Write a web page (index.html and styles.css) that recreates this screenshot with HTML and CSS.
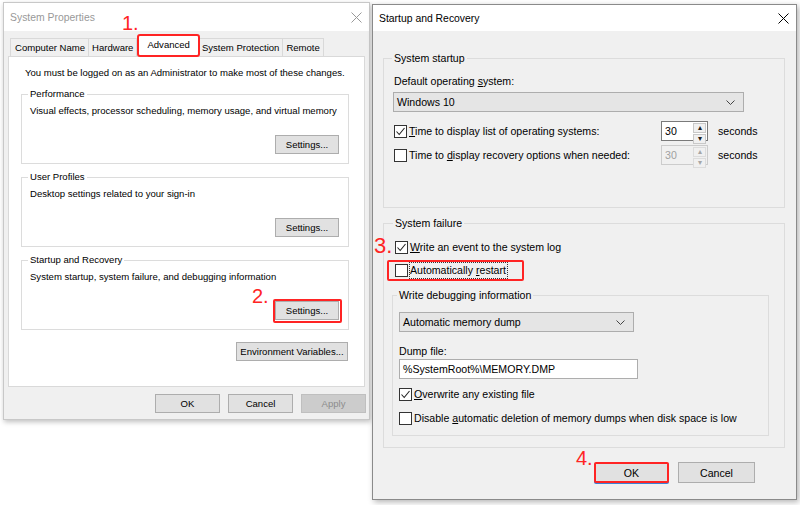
FILE: index.html
```html
<!DOCTYPE html>
<html lang="en">

<head>
    <meta charset="UTF-8">
    <meta name="viewport" content="width=device-width, initial-scale=1.0">
    <title>Startup and Recovery</title>
    <link rel="stylesheet" href="styles.css">
</head>

<body>
    <div class="desk">

        <!-- System Properties (behind) -->
        <section class="win win-sys">
            <header class="titlebar">
                <span>System Properties</span>
                <svg class="x" width="11" height="11" viewBox="0 0 11 11"><path d="M0.5 0.5L10.5 10.5M10.5 0.5L0.5 10.5"/></svg>
            </header>
            <div class="sys-body">
                <nav class="tabs">
                    <span class="tab">Computer Name</span>
                    <span class="tab">Hardware</span>
                    <span class="tab tab-on">Advanced</span>
                    <span class="tab">System Protection</span>
                    <span class="tab">Remote</span>
                </nav>
                <div class="panel">
                    <p class="intro">You must be logged on as an Administrator to make most of these changes.</p>
                    <fieldset class="grp">
                        <legend>Performance</legend>
                        <p class="desc">Visual effects, processor scheduling, memory usage, and virtual memory</p>
                        <div class="grp-foot"><button class="btn">Settings...</button></div>
                    </fieldset>
                    <fieldset class="grp">
                        <legend>User Profiles</legend>
                        <p class="desc">Desktop settings related to your sign-in</p>
                        <div class="grp-foot"><button class="btn">Settings...</button></div>
                    </fieldset>
                    <fieldset class="grp">
                        <legend>Startup and Recovery</legend>
                        <p class="desc">System startup, system failure, and debugging information</p>
                        <div class="grp-foot"><span class="hl-btn"><button class="btn">Settings...</button></span></div>
                    </fieldset>
                    <div class="env"><button class="btn btn-env">Environment Variables...</button></div>
                </div>
                <div class="actions">
                    <button class="btn btn-wide">OK</button>
                    <button class="btn btn-wide">Cancel</button>
                    <button class="btn btn-wide btn-off">Apply</button>
                </div>
            </div>
        </section>

        <!-- Startup and Recovery (front) -->
        <section class="win win-rec">
            <header class="titlebar">
                <span>Startup and Recovery</span>
                <svg class="x" width="11" height="11" viewBox="0 0 11 11"><path d="M0.5 0.5L10.5 10.5M10.5 0.5L0.5 10.5"/></svg>
            </header>
            <div class="rec-body">
                <fieldset class="box box-startup">
                    <legend>System startup</legend>
                    <div class="lbl">Default operating <u>s</u>ystem:</div>
                    <div class="select sel-os">
                        <span>Windows 10</span>
                        <svg width="9" height="5" viewBox="0 0 9 5"><path d="M0.5 0.5L4.5 4.5L8.5 0.5"/></svg>
                    </div>
                    <div class="time-row">
                        <label class="check"><span class="cb"><svg width="11" height="11" viewBox="0 0 11 11"><path d="M1.5 5.5L4.2 8.5L9.5 2"/></svg></span><span><u>T</u>ime to display list of operating systems:</span></label>
                        <span class="spin">
                            <span class="spin-val">30</span>
                            <span class="spin-arrows"><span>&#9652;</span><span>&#9662;</span></span>
                        </span>
                        <span>seconds</span>
                    </div>
                    <div class="time-row">
                        <label class="check"><span class="cb"></span><span>Time to <u>d</u>isplay recovery options when needed:</span></label>
                        <span class="spin spin-off">
                            <span class="spin-val">30</span>
                            <span class="spin-arrows"><span>&#9652;</span><span>&#9662;</span></span>
                        </span>
                        <span>seconds</span>
                    </div>
                </fieldset>

                <fieldset class="box box-failure">
                    <legend>System failure</legend>
                    <label class="check"><span class="cb"><svg width="11" height="11" viewBox="0 0 11 11"><path d="M1.5 5.5L4.2 8.5L9.5 2"/></svg></span><span><u>W</u>rite an event to the system log</span></label>
                    <label class="check hl-row"><span class="cb"></span><span class="focus">Automatically <u>r</u>estart</span></label>
                    <fieldset class="box box-debug">
                        <legend>Write debugging information</legend>
                        <div class="select sel-dump">
                            <span>Automatic memory dump</span>
                            <svg width="9" height="5" viewBox="0 0 9 5"><path d="M0.5 0.5L4.5 4.5L8.5 0.5"/></svg>
                        </div>
                        <div class="lbl lbl-dump">Dump file:</div>
                        <div class="field">%SystemRoot%\MEMORY.DMP</div>
                        <label class="check chk-over"><span class="cb"><svg width="11" height="11" viewBox="0 0 11 11"><path d="M1.5 5.5L4.2 8.5L9.5 2"/></svg></span><span><u>O</u>verwrite any existing file</span></label>
                        <label class="check chk-disable"><span class="cb"></span><span>Disable <u>a</u>utomatic deletion of memory dumps when disk space is low</span></label>
                    </fieldset>
                </fieldset>

                <div class="rec-actions">
                    <button class="btn btn-ok">OK</button>
                    <button class="btn btn-cancel">Cancel</button>
                </div>
            </div>
        </section>

        <span class="mark mark-1">1.</span>
        <span class="mark mark-2">2.</span>
        <span class="mark mark-3">3.</span>
        <span class="mark mark-4">4.</span>
    </div>
</body>

</html>
```

FILE: styles.css
```css
* {
    box-sizing: border-box;
}

body {
    margin: 0;
    background: #fff;
    font-family: "Liberation Sans", Arial, sans-serif;
    color: #000;
}

.desk {
    position: relative;
    width: 800px;
    height: 505px;
    overflow: hidden;
}

/* windows */
.win {
    position: absolute;
    display: flex;
    flex-direction: column;
    background: #f0f0f0;
}

.win-sys {
    left: 3px;
    top: 2px;
    width: 367px;
    height: 418px;
    border: 1px solid #c8c8c8;
    box-shadow: 1px 2px 5px rgba(0, 0, 0, 0.25);
    font-size: 9.55px;
    white-space: nowrap;
}

.win-rec {
    left: 372px;
    top: 4px;
    width: 425px;
    height: 496px;
    border: 1px solid #8a8a8a;
    box-shadow: 2px 2px 6px rgba(0, 0, 0, 0.3);
    font-size: 10.6px;
    white-space: nowrap;
}

.titlebar {
    display: flex;
    align-items: center;
    justify-content: space-between;
    background: #fff;
    padding: 0 7px 0 6px;
    font-size: 10.4px;
}

.titlebar .x path {
    stroke: #000;
    stroke-width: 1;
    fill: none;
}

.win-sys .titlebar {
    height: 28px;
    color: #999;
}

.win-sys .titlebar .x path {
    stroke: #999;
}

.win-rec .titlebar {
    height: 26px;
}

/* buttons */
.btn {
    font: inherit;
    height: 19px;
    width: 64px;
    padding: 0;
    background: #e1e1e1;
    border: 1px solid #adadad;
    color: #000;
    white-space: nowrap;
}

.btn-env {
    width: 112px;
}

.btn-wide {
    width: 65px;
}

.btn-off {
    background: #cccccc;
    border-color: #bfbfbf;
    color: #8d8d8d;
}

/* system properties body */
.sys-body {
    flex: 1;
    padding: 3px 4px 0 4px;
}

.tabs {
    display: flex;
    align-items: flex-end;
    height: 22px;
    margin-left: 2px;
}

.tab {
    height: 18px;
    line-height: 17px;
    padding: 0 3px;
    border: 1px solid #d9d9d9;
    border-bottom: none;
    margin-left: -1px;
    background: #f0f0f0;
}

.tab:first-child {
    margin-left: 0;
    padding-left: 4px;
}

.tab-on {
    position: relative;
    z-index: 1;
    height: 23px;
    line-height: 18px;
    margin: 0 -1px -1px 0;
    padding: 0 8px;
    background: #fff;
    border: 2px solid #ff2424;
    border-radius: 3px;
}

.panel {
    height: 331px;
    background: #fff;
    border: 1px solid #d9d9d9;
    padding: 9px 15px 0 12px;
}

.intro {
    margin: 0;
    padding-left: 4px;
    line-height: 14px;
}

.grp {
    margin: 7px 0 0;
    padding: 3px 9px 9px 8px;
    border: 1px solid #dcdcdc;
    min-width: 0;
}

.grp + .grp {
    margin-top: 6px;
}

.grp legend {
    padding: 0 2px;
    margin-left: -2px;
    line-height: 14px;
}

.desc {
    margin: 0;
    line-height: 14px;
}

.grp-foot {
    display: flex;
    justify-content: flex-end;
    margin-top: 17px;
}

.hl-btn {
    display: flex;
    border: 2px solid #ff2424;
    border-radius: 2px;
    padding: 0 1px 1px 0;
    margin: -2px -3px -3px 0;
}

.env {
    display: flex;
    justify-content: flex-end;
    margin: 12px 1px 0 0;
}

.actions {
    display: flex;
    justify-content: flex-end;
    gap: 8px;
    margin: 7px -1px 0 0;
}

/* startup and recovery body */
.rec-body {
    flex: 1;
    padding: 20px 11px 0 10px;
}

.box {
    margin: 0;
    border: 1px solid #dcdcdc;
    min-width: 0;
    display: flex;
    flex-direction: column;
    align-items: flex-start;
}

.box legend {
    padding: 0 2px;
    margin-left: -2px;
    line-height: 15px;
}

.box-startup {
    padding: 8px 10px 42px 10px;
}

.box-failure {
    margin-top: 8px;
    padding: 9px 15px 11px 11px;
}

.box-debug {
    align-self: stretch;
    margin: 7px 0 0 -3px;
    padding: 9px 6px 9px 6px;
}

.lbl {
    line-height: 15px;
}

.select {
    display: flex;
    align-items: center;
    justify-content: space-between;
    height: 20px;
    padding: 0 8px 0 3px;
    background: #e5e5e5;
    border: 1px solid #adadad;
}

.select path {
    stroke: #444;
    fill: none;
    stroke-width: 1;
}

.sel-os {
    width: 351px;
    margin: 3px 0 0 -1px;
}

.sel-dump {
    width: 235px;
}

.time-row {
    display: grid;
    grid-template-columns: 257px 47px auto;
    column-gap: 10px;
    align-items: center;
    margin-top: 4px;
}

.sel-os + .time-row {
    margin-top: 9px;
}

.check {
    display: flex;
    align-items: center;
    gap: 2px;
    line-height: 15px;
}

.cb {
    display: flex;
    align-items: center;
    justify-content: center;
    width: 13px;
    height: 13px;
    border: 1px solid #333;
    background: #fff;
}

.cb path {
    stroke: #222;
    stroke-width: 1.1;
    fill: none;
}

.spin {
    display: flex;
    height: 20px;
    border: 1px solid #7a7a7a;
    background: #fff;
}

.spin-val {
    flex: 1;
    padding-left: 3px;
    line-height: 18px;
}

.spin-arrows {
    display: flex;
    flex-direction: column;
    width: 15px;
    gap: 1px;
    padding: 1px;
    background: #fff;
}

.spin-arrows span {
    flex: 1;
    display: flex;
    align-items: center;
    justify-content: center;
    background: #f0f0f0;
    border: 1px solid #c8c8c8;
    font-size: 8px;
    line-height: 1;
    color: #222;
}

.spin-off {
    border-color: #cccccc;
    background: #f0f0f0;
    color: #a0a0a0;
}

.spin-off .spin-arrows {
    background: #f0f0f0;
}

.spin-off .spin-arrows span {
    color: #a6a6a6;
    border-color: #dcdcdc;
}

.hl-row {
    margin: 5px 0 0 -8px;
    padding: 1px 15px 1px 6px;
    border: 2px solid #ff2424;
    border-radius: 2px;
}

.focus {
    outline: 1px dotted #333;
    outline-offset: 0;
    padding-right: 1px;
}

.lbl-dump {
    margin-top: 12px;
}

.field {
    width: 239px;
    height: 20px;
    line-height: 18px;
    padding-left: 3px;
    background: #fff;
    border: 1px solid #adadad;
}

.chk-over {
    margin-top: 8px;
}

.chk-disable {
    margin-top: 9px;
}

.rec-actions {
    display: flex;
    justify-content: flex-end;
    gap: 9px;
    margin-top: 14px;
    padding-right: 30px;
}

.btn-ok {
    width: 75px;
    height: 21px;
    border: 2px solid #ff2424;
    border-radius: 2px;
    box-shadow: 0 1px 0 #3b82d6;
}

.btn-cancel {
    width: 77px;
    height: 21px;
}

/* red step numbers laid over the screenshot */
.mark {
    position: absolute;
    z-index: 5;
    color: #ff2424;
    font-family: "Liberation Sans", Arial, sans-serif;
    font-size: 20px;
    line-height: 1;
}

.mark-1 {
    left: 122px;
    top: 13px;
}

.mark-2 {
    left: 252px;
    top: 286px;
}

.mark-3 {
    left: 374px;
    top: 235px;
    font-size: 22px;
}

.mark-4 {
    left: 576px;
    top: 448px;
}
```
